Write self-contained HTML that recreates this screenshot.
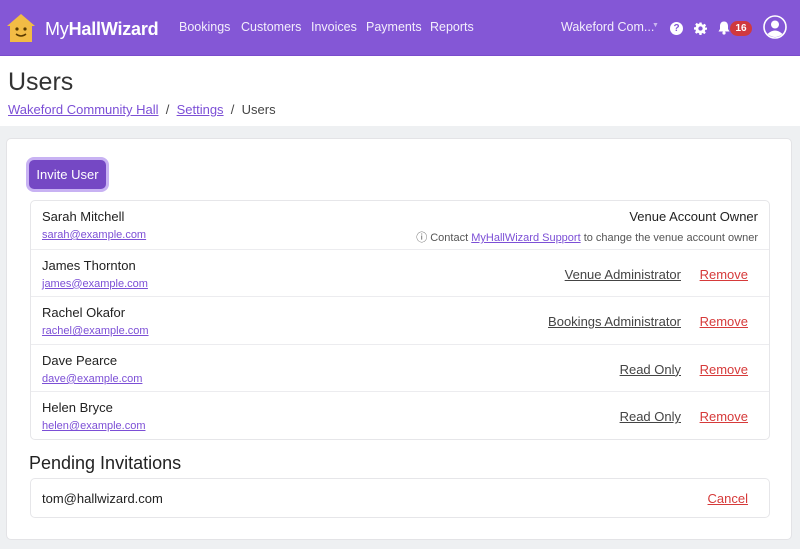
<!DOCTYPE html>
<html><head><meta charset="utf-8"><style>
*{box-sizing:border-box;margin:0;padding:0}
body{width:800px;height:549px;overflow:hidden;background:#eef0f2;font-family:"Liberation Sans",sans-serif;color:#222}
.nav{height:56px;background:#8457d6;position:relative;color:#fff;border-bottom:1px solid #7a4ccc}
.nav a{position:absolute;top:20px;font-size:12.5px;color:#f3eefc;white-space:nowrap}
.top{background:#fff;height:70px;padding:12px 8px}
h1{font-size:25px;font-weight:normal;color:#333;line-height:28px}
.bc{font-size:13px;margin-top:6px;color:#444}
.bc a{color:#7c4fd6}
.card{position:absolute;left:6px;top:138px;width:786px;height:402px;background:#fff;border:1px solid #e3e3e6;border-radius:5px}
.btn{position:absolute;left:22px;top:21px;width:77px;height:29px;background:#7548c4;color:#fff;font-size:13px;border-radius:5px;box-shadow:0 0 0 3px #c8b2f3;line-height:29px;text-align:center}
.list{position:absolute;left:23px;top:61px;width:740px;border:1px solid #e6e6e9;border-radius:5px}
.row{height:47.6px;border-top:1px solid #ececef;position:relative;font-size:13px}
.row:first-child{border-top:none}
.nm{position:absolute;left:11px;top:8px;color:#222}
.em{position:absolute;left:11px;top:28px;font-size:11px;color:#7c4fd6;text-decoration:underline}
.role{position:absolute;right:88px;top:17px;color:#444;text-decoration:underline}
.rm{position:absolute;right:21px;top:17px;color:#d63a3a;text-decoration:underline}
h2{position:absolute;left:22px;top:314px;font-size:18px;font-weight:normal;color:#222}
.pend{position:absolute;left:23px;top:339px;width:740px;height:40px;border:1px solid #e6e6e9;border-radius:5px;font-size:13px}
</style></head><body>
<div class="nav">
<svg style="position:absolute;left:6px;top:13px" width="30" height="30" viewBox="0 0 30 30"><path d="M15 1 L29 13 L26 13 L26 29 L4 29 L4 13 L1 13 Z" fill="#f2bc45"/><circle cx="11" cy="16" r="1.6" fill="#5a3b00"/><circle cx="19" cy="16" r="1.6" fill="#5a3b00"/><path d="M10 21 Q15 25 20 21" stroke="#5a3b00" stroke-width="1.5" fill="none"/></svg>
<div style="position:absolute;left:45px;top:19px;font-size:18px;color:#fff;letter-spacing:-0.2px">My<b>HallWizard</b></div>
<a style="left:179px">Bookings</a><a style="left:241px">Customers</a><a style="left:311px">Invoices</a><a style="left:366px">Payments</a><a style="left:430px">Reports</a>
<a style="left:561px">Wakeford Com...</a>
<span style="position:absolute;left:652px;top:22px;font-size:7px;color:#c9b6ee">▼</span>
<div style="position:absolute;left:670px;top:22px;width:13px;height:13px;border-radius:50%;background:#fff;color:#8457d6;font-size:10px;font-weight:bold;text-align:center;line-height:13px">?</div>
<svg style="position:absolute;left:694px;top:22px" width="13" height="13" viewBox="0 0 24 24"><path fill="#fff" d="M10 1h4l.6 3.2 2.2.9 2.7-1.9 2.8 2.8-1.9 2.7.9 2.2L24 10v4l-3.2.6-.9 2.2 1.9 2.7-2.8 2.8-2.7-1.9-2.2.9L14 24h-4l-.6-3.2-2.2-.9-2.7 1.9-2.8-2.8 1.9-2.7-.9-2.2L0 14v-4l3.2-.6.9-2.2L2.2 4.5 5 1.7l2.7 1.9 2.2-.9zM12 8a4 4 0 100 8 4 4 0 000-8z"/></svg>
<svg style="position:absolute;left:718px;top:21px" width="12" height="14" viewBox="0 0 12 14"><path d="M6 0.5C3 0.5 2 3 2 5v3L0.5 10.5h11L10 8V5C10 3 9 0.5 6 0.5Z" fill="#fff"/><circle cx="6" cy="12" r="1.6" fill="#fff"/></svg>
<div style="position:absolute;left:730px;top:21px;width:22px;height:15px;border-radius:8px;background:#d0393f;font-size:10px;font-weight:bold;text-align:center;line-height:15px">16</div>
<svg style="position:absolute;left:763px;top:15px" width="24" height="24" viewBox="0 0 24 24"><circle cx="12" cy="12" r="11" stroke="#fff" stroke-width="1.6" fill="none"/><circle cx="12" cy="9.5" r="4" fill="#fff"/><path d="M4.5 19 Q12 12 19.5 19 Q12 25 4.5 19Z" fill="#fff"/></svg>
</div>
<div class="top"><h1>Users</h1><div class="bc"><a href="#">Wakeford Community Hall</a> &nbsp;/&nbsp; <a href="#">Settings</a> &nbsp;/&nbsp; Users</div></div>
<div class="card">
<div class="btn">Invite User</div>
<div class="list">
<div class="row"><div class="nm">Sarah Mitchell</div><div class="em">sarah@example.com</div><div style="position:absolute;right:11px;top:8px">Venue Account Owner</div><div style="position:absolute;right:11px;top:28px;font-size:11px;color:#555">ⓘ Contact <span style="color:#7c4fd6;text-decoration:underline">MyHallWizard Support</span> to change the venue account owner</div></div>
<div class="row"><div class="nm">James Thornton</div><div class="em">james@example.com</div><div class="role">Venue Administrator</div><div class="rm">Remove</div></div>
<div class="row"><div class="nm">Rachel Okafor</div><div class="em">rachel@example.com</div><div class="role">Bookings Administrator</div><div class="rm">Remove</div></div>
<div class="row"><div class="nm">Dave Pearce</div><div class="em">dave@example.com</div><div class="role">Read Only</div><div class="rm">Remove</div></div>
<div class="row"><div class="nm">Helen Bryce</div><div class="em">helen@example.com</div><div class="role">Read Only</div><div class="rm">Remove</div></div>
</div>
<h2>Pending Invitations</h2>
<div class="pend"><div style="position:absolute;left:11px;top:12px">tom@hallwizard.com</div><div class="rm" style="top:12px">Cancel</div></div>
</div>
</body></html>
